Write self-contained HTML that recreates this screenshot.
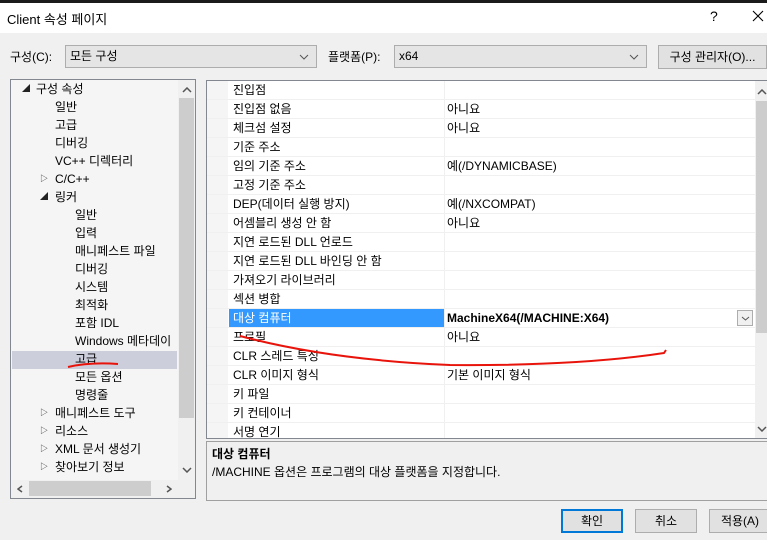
<!DOCTYPE html>
<html><head><meta charset="utf-8"><style>
*{margin:0;padding:0;box-sizing:border-box}
body{width:767px;height:540px;background:#f0f0f0;position:relative;overflow:hidden;font-family:"Liberation Sans","Noto Sans CJK KR",sans-serif;font-size:12px;color:#000}
.a{position:absolute;white-space:nowrap}
.combo{position:absolute;background:#e5e5e5;border:1px solid #adadad;height:23px;line-height:21px;padding-left:4px}
.btn{position:absolute;background:#e1e1e1;border:1px solid #adadad;height:24px;line-height:22px;text-align:center}
.tr{position:absolute;height:18px;line-height:18px}
.row{position:absolute;left:0;width:548px;height:19px;border-bottom:1px solid #f0f0f0;line-height:18px}
.row .l{position:absolute;left:26px}
.row .r{position:absolute;left:237px;width:1px;top:0;height:19px;background:#f0f0f0}
.row .v{position:absolute;left:240px}
.tri{position:absolute;font-size:8px;color:#222;height:18px;line-height:18px}
</style></head><body>
<div class="a" style="left:0;top:0;width:767px;height:3px;background:#1b1b1b"></div>
<div class="a" style="left:0;top:3px;width:767px;height:30px;background:#fff"></div>
<div class="a" style="left:7px;top:9px;font-size:13px">Client 속성 페이지</div>
<div class="a" style="left:710px;top:8px;font-size:14px">?</div>
<svg class="a" style="left:752px;top:10px" width="12" height="12"><path d="M1 1L11 11M11 1L1 11" stroke="#000" stroke-width="1.1"/></svg>

<div class="a" style="left:10px;top:48px">구성(C):</div>
<div class="combo" style="left:65px;top:45px;width:252px">모든 구성<svg class="a" style="right:7px;top:8px" width="10" height="6"><path d="M1 1L5 5L9 1" stroke="#555" fill="none"/></svg></div>
<div class="a" style="left:328px;top:48px">플랫폼(P):</div>
<div class="combo" style="left:394px;top:45px;width:253px">x64<svg class="a" style="right:7px;top:8px" width="10" height="6"><path d="M1 1L5 5L9 1" stroke="#555" fill="none"/></svg></div>
<div class="btn" style="left:658px;top:45px;width:109px">구성 관리자(O)...</div>

<!-- tree -->
<div class="a" style="left:10px;top:79px;width:186px;height:420px;background:#f5f5f5;border:1px solid #828790"></div>
<div class="a" style="left:178px;top:80px;width:17px;height:400px;background:#f0f0f0"></div>
<div class="a" style="left:179px;top:98px;width:15px;height:320px;background:#cdcdcd"></div>
<svg class="a" style="left:182px;top:87px" width="10" height="6"><path d="M1 5L5 1L9 5" stroke="#555" stroke-width="1.5" fill="none"/></svg>
<svg class="a" style="left:182px;top:467px" width="10" height="6"><path d="M1 1L5 5L9 1" stroke="#555" stroke-width="1.5" fill="none"/></svg>
<div class="a" style="left:11px;top:480px;width:184px;height:18px;background:#f0f0f0"></div>
<div class="a" style="left:29px;top:481px;width:122px;height:15px;background:#cdcdcd"></div>
<svg class="a" style="left:17px;top:485px" width="6" height="8"><path d="M5 1L1 4L5 7" stroke="#555" stroke-width="1.5" fill="none"/></svg>
<svg class="a" style="left:166px;top:485px" width="6" height="8"><path d="M1 1L5 4L1 7" stroke="#555" stroke-width="1.5" fill="none"/></svg>
<div class="a" style="left:12px;top:351px;width:165px;height:18px;background:#cccedb"></div>
<span class="tri" style="left:22px;top:80px">◢</span><div class="tr" style="left:36px;top:80px">구성 속성</div>
<div class="tr" style="left:55px;top:98px">일반</div>
<div class="tr" style="left:55px;top:116px">고급</div>
<div class="tr" style="left:55px;top:134px">디버깅</div>
<div class="tr" style="left:55px;top:152px">VC++ 디렉터리</div>
<span class="tri" style="left:40px;top:170px">▷</span><div class="tr" style="left:55px;top:170px">C/C++</div>
<span class="tri" style="left:40px;top:188px">◢</span><div class="tr" style="left:55px;top:188px">링커</div>
<div class="tr" style="left:75px;top:206px">일반</div>
<div class="tr" style="left:75px;top:224px">입력</div>
<div class="tr" style="left:75px;top:242px">매니페스트 파일</div>
<div class="tr" style="left:75px;top:260px">디버깅</div>
<div class="tr" style="left:75px;top:278px">시스템</div>
<div class="tr" style="left:75px;top:296px">최적화</div>
<div class="tr" style="left:75px;top:314px">포함 IDL</div>
<div class="tr" style="left:75px;top:332px;width:102px;overflow:hidden">Windows 메타데이터</div>
<div class="tr" style="left:75px;top:350px">고급</div>
<div class="tr" style="left:75px;top:368px">모든 옵션</div>
<div class="tr" style="left:75px;top:386px">명령줄</div>
<span class="tri" style="left:40px;top:404px">▷</span><div class="tr" style="left:55px;top:404px">매니페스트 도구</div>
<span class="tri" style="left:40px;top:422px">▷</span><div class="tr" style="left:55px;top:422px">리소스</div>
<span class="tri" style="left:40px;top:440px">▷</span><div class="tr" style="left:55px;top:440px">XML 문서 생성기</div>
<span class="tri" style="left:40px;top:458px">▷</span><div class="tr" style="left:55px;top:458px">찾아보기 정보</div>

<!-- grid -->
<div class="a" style="left:206px;top:80px;width:561px;height:359px;background:#fff;border:1px solid #828790;border-right:none;overflow:hidden">
<div class="a" style="left:0;top:0;width:21px;height:359px;background:#f5f5f5"></div>
<div class="a" style="left:548px;top:0;width:13px;height:359px;background:#f0f0f0"></div>
<div class="a" style="left:549px;top:20px;width:12px;height:232px;background:#cdcdcd"></div>
<svg class="a" style="left:550px;top:8px" width="10" height="6"><path d="M1 5L5 1L9 5" stroke="#555" stroke-width="1.5" fill="none"/></svg>
<svg class="a" style="left:550px;top:345px" width="10" height="6"><path d="M1 1L5 5L9 1" stroke="#555" stroke-width="1.5" fill="none"/></svg>
<div style="position:absolute;left:0;top:0;width:548px">
<div class="row" style="top:0"><span class="l">진입점</span><span class="r"></span></div>
<div class="row" style="top:19px"><span class="l">진입점 없음</span><span class="r"></span><span class="v">아니요</span></div>
<div class="row" style="top:38px"><span class="l">체크섬 설정</span><span class="r"></span><span class="v">아니요</span></div>
<div class="row" style="top:57px"><span class="l">기준 주소</span><span class="r"></span></div>
<div class="row" style="top:76px"><span class="l">임의 기준 주소</span><span class="r"></span><span class="v">예(/DYNAMICBASE)</span></div>
<div class="row" style="top:95px"><span class="l">고정 기준 주소</span><span class="r"></span></div>
<div class="row" style="top:114px"><span class="l">DEP(데이터 실행 방지)</span><span class="r"></span><span class="v">예(/NXCOMPAT)</span></div>
<div class="row" style="top:133px"><span class="l">어셈블리 생성 안 함</span><span class="r"></span><span class="v">아니요</span></div>
<div class="row" style="top:152px"><span class="l">지연 로드된 DLL 언로드</span><span class="r"></span></div>
<div class="row" style="top:171px"><span class="l">지연 로드된 DLL 바인딩 안 함</span><span class="r"></span></div>
<div class="row" style="top:190px"><span class="l">가져오기 라이브러리</span><span class="r"></span></div>
<div class="row" style="top:209px"><span class="l">섹션 병합</span><span class="r"></span></div>
<div class="row" style="top:228px"><div class="a" style="left:22px;top:0;width:215px;height:18px;background:#3399ff"></div><span class="l" style="color:#fff">대상 컴퓨터</span><span class="r"></span><span class="v" style="font-weight:bold">MachineX64(/MACHINE:X64)</span><div class="a" style="left:530px;top:1px;width:16px;height:16px;border:1px solid #adadad;background:#f0f0f0"><svg class="a" style="left:3px;top:5px" width="9" height="5"><path d="M1 1L4.5 4L8 1" stroke="#555" fill="none"/></svg></div></div>
<div class="row" style="top:247px"><span class="l">프로필</span><span class="r"></span><span class="v">아니요</span></div>
<div class="row" style="top:266px"><span class="l">CLR 스레드 특성</span><span class="r"></span></div>
<div class="row" style="top:285px"><span class="l">CLR 이미지 형식</span><span class="r"></span><span class="v">기본 이미지 형식</span></div>
<div class="row" style="top:304px"><span class="l">키 파일</span><span class="r"></span></div>
<div class="row" style="top:323px"><span class="l">키 컨테이너</span><span class="r"></span></div>
<div class="row" style="top:342px"><span class="l">서명 연기</span><span class="r"></span></div>
</div>
</div>

<!-- description -->
<div class="a" style="left:206px;top:441px;width:561px;height:60px;border:1px solid #a0a0a0;border-right:none"></div>
<div class="a" style="left:212px;top:445px;font-weight:bold">대상 컴퓨터</div>
<div class="a" style="left:212px;top:463px">/MACHINE 옵션은 프로그램의 대상 플랫폼을 지정합니다.</div>

<svg class="a" style="left:0;top:0" width="767" height="540">
<path d="M68 367 Q90 362 118 364" stroke="#e8140c" stroke-width="2" fill="none"/>
<path d="M240 336 Q330 360 450 365 Q580 366 664 353 L666 350" stroke="#e8140c" stroke-width="2" fill="none"/>
</svg>

<div class="btn" style="left:561px;top:509px;width:62px;border:2px solid #0078d7;line-height:20px">확인</div>
<div class="btn" style="left:635px;top:509px;width:62px">취소</div>
<div class="btn" style="left:709px;top:509px;width:62px">적용(A)</div>
</body></html>
